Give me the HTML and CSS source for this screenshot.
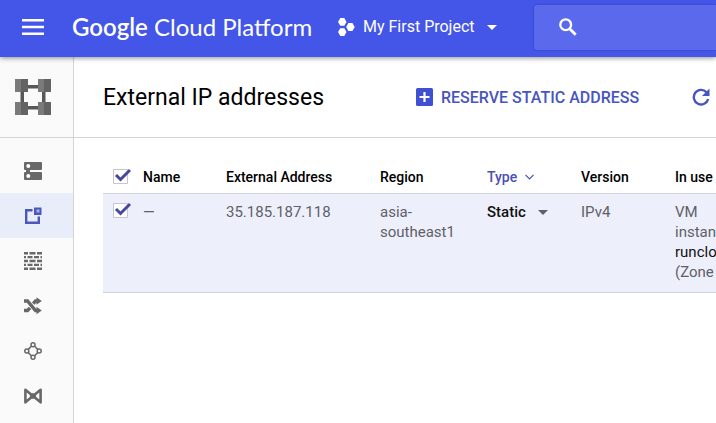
FILE: index.html
```html
<!DOCTYPE html>
<html lang="en">
<head>
  <meta charset="UTF-8" />
  <meta name="viewport" content="width=device-width, initial-scale=1.0"/>
  <title>External IP addresses</title>
  <link rel="stylesheet" href="styles.css">
</head>
<body>

  <header class="header">
    <button class="menu-btn" aria-label="Menu">
      <svg width="22" height="16" viewBox="0 0 22 16" fill="currentColor">
        <path d="M0 0h22v2.400H0zM0 6.800h22v2.400H0zM0 13.600h22V16H0z"/>
      </svg>
    </button>
    <a class="logo" href="#"><b>Google</b> Cloud Platform</a>
    <button class="project">
      <svg width="17" height="18" viewBox="0 0 17 18" fill="currentColor">
        <path d="M2.300 0h4l2.200 3.900-2.200 3.800h-4L0 3.900zM2.300 10.200h4l2.200 3.900L6.300 18h-4L0 14.100zM10.400 5.100h4L16.700 9l-2.300 3.900h-4L8.200 9z"/>
      </svg>
      <span>My First Project</span>
      <svg class="caret" width="10" height="5" viewBox="0 0 10 5" fill="currentColor"><path d="M0 0h10L5 5z"/></svg>
    </button>
    <label class="search">
      <svg width="18" height="18" viewBox="0 0 18 18" fill="none" stroke="currentColor">
        <circle cx="6.700" cy="6.700" r="5.400" stroke-width="2.300"/>
        <path d="M10.700 10.700l6 6" stroke-width="2.800"/>
      </svg>
      <input type="text" aria-label="Search">
    </label>
  </header>

  <div class="container">
    <!-- Sidebar -->
    <aside class="sidebar">
      <div class="product">
        <svg width="36" height="36" viewBox="0 0 36 36">
          <path d="M12 6h12v3.500H12zM12 27h12v3.500H12zM5.500 13H9v10H5.500zM27 13h3.500v10H27z" fill="#585858"/>
          <path d="M0 0h13v13H0zM23 0h13v13H23zM0 23h13v13H0zM23 23h13v13H23z" fill="#7a7a7a"/>
          <path d="M6 0h7v13H6zM29 0h7v13h-7zM6 23h7v13H6zM29 23h7v13h-7z" fill="#636363"/>
        </svg>
      </div>
      <nav class="nav">
        <a href="#" aria-label="VPC networks">
          <svg width="18" height="18" viewBox="0 0 18 18">
            <path d="M1 0h16a1 1 0 0 1 1 1v6a1 1 0 0 1-1 1H6v2h11a1 1 0 0 1 1 1v6a1 1 0 0 1-1 1H1a1 1 0 0 1-1-1v-6a1 1 0 0 1 1-1h1V8H1a1 1 0 0 1-1-1V1a1 1 0 0 1 1-1z" fill="#686868"/>
            <circle cx="4.300" cy="4" r="2" fill="#fff"/><circle cx="4.300" cy="14" r="2" fill="#fff"/>
          </svg>
        </a>
        <a class="active" href="#" aria-label="External IP addresses">
          <svg width="18" height="18" viewBox="0 0 18 18">
            <path d="M8.500 3.200H2.200v12.600h12.600V9.500" fill="none" stroke="#4a58bd" stroke-width="2.400"/>
            <path d="M10 .500h7.500V8H10z" fill="#4a58bd"/><path d="M12.500 2.500h3v3h-3z" fill="#a4b0ea"/>
          </svg>
        </a>
        <a href="#" aria-label="Firewall rules">
          <svg width="18" height="18" viewBox="0 0 18 18" fill="#686868">
            <path d="M0 0h4v2.400H0zM5.500 0h6v2.400h-6zM13 0h5v2.400h-5zM0 3.900h2v2.400H0zM3.500 3.900h5v2.400h-5zM10 3.900h5v2.400h-5zM16.500 3.900H18v2.400h-1.500zM0 7.800h4v2.400H0zM5.500 7.800h6v2.400h-6zM13 7.800h5v2.400h-5zM0 11.700h2v2.400H0zM3.500 11.700h5v2.400h-5zM10 11.700h5v2.400h-5zM16.500 11.700H18v2.400h-1.500zM0 15.600h4V18H0zM5.500 15.600h6V18h-6zM13 15.600h5V18h-5z"/>
          </svg>
        </a>
        <a href="#" aria-label="Routes">
          <svg width="18" height="18" viewBox="0 0 18 18">
            <path d="M0 4h3.500l8 9.500H14M0 13.500h3.500l2.500-2.700M9.200 6.600L11.500 4H14" fill="none" stroke="#686868" stroke-width="3.400"/>
            <path d="M12.500 .300L17.800 4l-5.300 3.800zM12.500 9.700l5.300 3.800-5.300 3.800z" fill="#686868"/>
          </svg>
        </a>
        <a href="#" aria-label="VPC network peering">
          <svg width="18" height="18" viewBox="0 0 18 18" fill="none" stroke="#686868" stroke-width="1.500">
            <circle cx="9" cy="2.800" r="2"/><circle cx="2.800" cy="9" r="2"/><circle cx="15.200" cy="9" r="2"/><circle cx="9" cy="15.200" r="2"/>
            <path d="M7.400 4.200L4.200 7.400M10.600 4.200l3.200 3.200M4.200 10.600l3.200 3.200M13.800 10.600l-3.200 3.200"/>
          </svg>
        </a>
        <a href="#" aria-label="Shared VPC">
          <svg width="18" height="18" viewBox="0 0 18 18">
            <path d="M1.400 2.700L16.600 15.300V2.700L1.400 15.300z" fill="none" stroke="#686868" stroke-width="2.600" stroke-linejoin="round"/>
            <path d="M9 5.800L12.500 9 9 12.200 5.500 9z" fill="#686868"/>
          </svg>
        </a>
      </nav>
    </aside>

    <!-- Main content -->
    <main class="main-content">
      <div class="toolbar">
        <h1>External IP addresses</h1>
        <button class="action">
          <svg width="17" height="18" viewBox="0 0 17 18">
            <rect width="17" height="18" rx="1.500" fill="#3f51d0"/>
            <path d="M8.500 4v10M3.500 9h10" stroke="#fff" stroke-width="2.200"/>
          </svg>
          <span>RESERVE STATIC ADDRESS</span>
        </button>
        <button class="action" aria-label="Refresh">
          <svg width="18" height="18" viewBox="0 0 18 18">
            <path d="M14.500 4.200A7.300 7.300 0 1 0 16.200 11" fill="none" stroke="#4755c0" stroke-width="2.400"/>
            <path d="M17.500 .500v7.500H10z" fill="#4755c0"/>
          </svg>
        </button>
      </div>

      <div class="content">
        <table class="addresses">
          <thead>
            <tr>
              <th class="check"><input type="checkbox" aria-label="Select all" checked></th>
              <th class="name">Name</th>
              <th class="address">External Address</th>
              <th class="region">Region</th>
              <th class="type">
                <a href="#">Type
                  <svg width="9" height="6" viewBox="0 0 9 6" fill="none" stroke="currentColor" stroke-width="1.200"><path d="M.500 .800l4 4 4-4"/></svg>
                </a>
              </th>
              <th class="version">Version</th>
              <th class="in-use">In use</th>
            </tr>
          </thead>
          <tbody>
            <tr>
              <td><input type="checkbox" aria-label="Select 35.185.187.118" checked></td>
              <td>—</td>
              <td>35.185.187.118</td>
              <td>asia-southeast1</td>
              <td>
                <select aria-label="Type">
                  <option>Static</option>
                  <option>Ephemeral</option>
                </select>
              </td>
              <td>IPv4</td>
              <td>VM instance <a href="#">runcloud</a> (Zone</td>
            </tr>
          </tbody>
        </table>
      </div>
    </main>
  </div>

</body>
</html>
```
FILE: styles.css
```css
body {
  margin: 0;
  font-family: Roboto, sans-serif;
  background: #fff;
  color: #000;
  min-height: 100vh;
  display: flex;
  flex-direction: column;
  overflow: hidden;
}

button {
  background: none;
  border: none;
  padding: 0;
  font-family: inherit;
  cursor: pointer;
}

svg {
  display: block;
  flex-shrink: 0;
}

.header {
  display: flex;
  align-items: center;
  height: 54px;
  padding: 0 0 3px 22px;
  background-color: #4356e8;
  color: #fff;
  box-shadow: 0 1px 5px rgba(0, 0, 0, 0.45);
  position: relative;
  z-index: 1;
}

.menu-btn {
  color: #fff;
  margin-right: 28px;
}

.logo {
  width: 266px;
  flex-shrink: 0;
  font-family: Lato, sans-serif;
  font-size: 24px;
  line-height: 30px;
  color: #fff;
  text-decoration: none;
  white-space: nowrap;
}

.logo b {
  font-weight: 600;
}

.project {
  display: flex;
  align-items: center;
  flex-shrink: 0;
  width: 196px;
  color: #fff;
  font-size: 16px;
  line-height: 20px;
  white-space: nowrap;
}

.project span {
  margin-left: 8px;
}

.project .caret {
  margin-left: 12px;
}

.search {
  display: flex;
  align-items: center;
  flex: 1;
  min-width: 0;
  height: 45px;
  padding-left: 25px;
  box-sizing: border-box;
  border-radius: 3px 0 0 3px;
  background-color: #5b6aec;
  box-shadow: 0 0 2px rgba(0, 0, 0, 0.3);
}

.search input {
  flex: 1;
  min-width: 0;
  margin-left: 16px;
  border: none;
  outline: none;
  background: none;
  color: #fff;
  font: 16px Roboto, sans-serif;
}

.container {
  display: flex;
  flex: 1;
}

.sidebar {
  width: 73px;
  flex-shrink: 0;
  background-color: #fafafa;
  border-right: 1px solid #d4d4d4;
}

.product {
  display: flex;
  align-items: center;
  justify-content: center;
  height: 80px;
  padding-right: 7px;
  border-bottom: 1px solid #d4d4d4;
}

.nav {
  padding-top: 10px;
}

.nav a {
  display: flex;
  align-items: center;
  justify-content: center;
  height: 45px;
  padding-right: 7px;
}

.nav a.active {
  background-color: #e9edf9;
}

.main-content {
  flex: 1;
  min-width: 0;
}

.toolbar {
  display: flex;
  align-items: center;
  gap: 53px;
  height: 80px;
  padding-left: 29px;
  border-bottom: 1px solid #d4d4d4;
}

.toolbar h1 {
  margin: 0;
  width: 260px;
  flex-shrink: 0;
  font-size: 23px;
  font-weight: 400;
}

.action {
  display: flex;
  align-items: center;
  gap: 8px;
  color: #4755c0;
  font-size: 16px;
  font-weight: 500;
  white-space: nowrap;
}

.content {
  padding: 22px 0 0 29px;
  overflow: hidden;
}

.addresses {
  width: 673px;
  table-layout: fixed;
  border-collapse: collapse;
  font-size: 15px;
  line-height: 20px;
}

.addresses th {
  padding: 7px 0 6px;
  text-align: left;
  font-size: 14px;
  font-weight: 500;
  border-bottom: 1px solid #cfd3e0;
}

.addresses td {
  padding: 8px 20px 10px 0;
  vertical-align: top;
  color: #5f6168;
  background-color: #edeffa;
  border-bottom: 1px solid #cfd3e0;
}

.check { width: 40px; }
.name { width: 83px; }
.address { width: 154px; }
.region { width: 107px; }
.type { width: 94px; }
.version { width: 94px; }

.addresses th a {
  display: flex;
  align-items: center;
  gap: 8px;
  color: #4a4fb5;
  text-decoration: none;
}

.addresses td a {
  color: #111;
  text-decoration: none;
}

.addresses input {
  appearance: none;
  display: block;
  width: 18px;
  height: 16px;
  margin: 0 0 2px 10px;
  background: url("data:image/svg+xml,%3Csvg xmlns='http://www.w3.org/2000/svg' viewBox='0 0 18 16'%3E%3Cpath d='M.5 1.5h14v14H.5z' fill='%23fff' stroke='%23c4c6d2'/%3E%3C/svg%3E") no-repeat;
}

.addresses input:checked {
  background-image: url("data:image/svg+xml,%3Csvg xmlns='http://www.w3.org/2000/svg' viewBox='0 0 18 16'%3E%3Cpath d='M.5 1.5h14v14H.5z' fill='%23fff' stroke='%23c4c6d2'/%3E%3Cpath d='M3 7l4.500 4.500L17 2' fill='none' stroke='%2346479f' stroke-width='3'/%3E%3C/svg%3E");
}

.addresses select {
  appearance: none;
  display: block;
  width: 61px;
  height: 20px;
  padding: 0;
  border: none;
  color: #111;
  font: 500 15px/20px Roboto, sans-serif;
  background: url("data:image/svg+xml,%3Csvg xmlns='http://www.w3.org/2000/svg' viewBox='0 0 10 5'%3E%3Cpath d='M0 0h10L5 5z' fill='%235f6168'/%3E%3C/svg%3E") no-repeat right 8px / 10px 5px;
}
```
